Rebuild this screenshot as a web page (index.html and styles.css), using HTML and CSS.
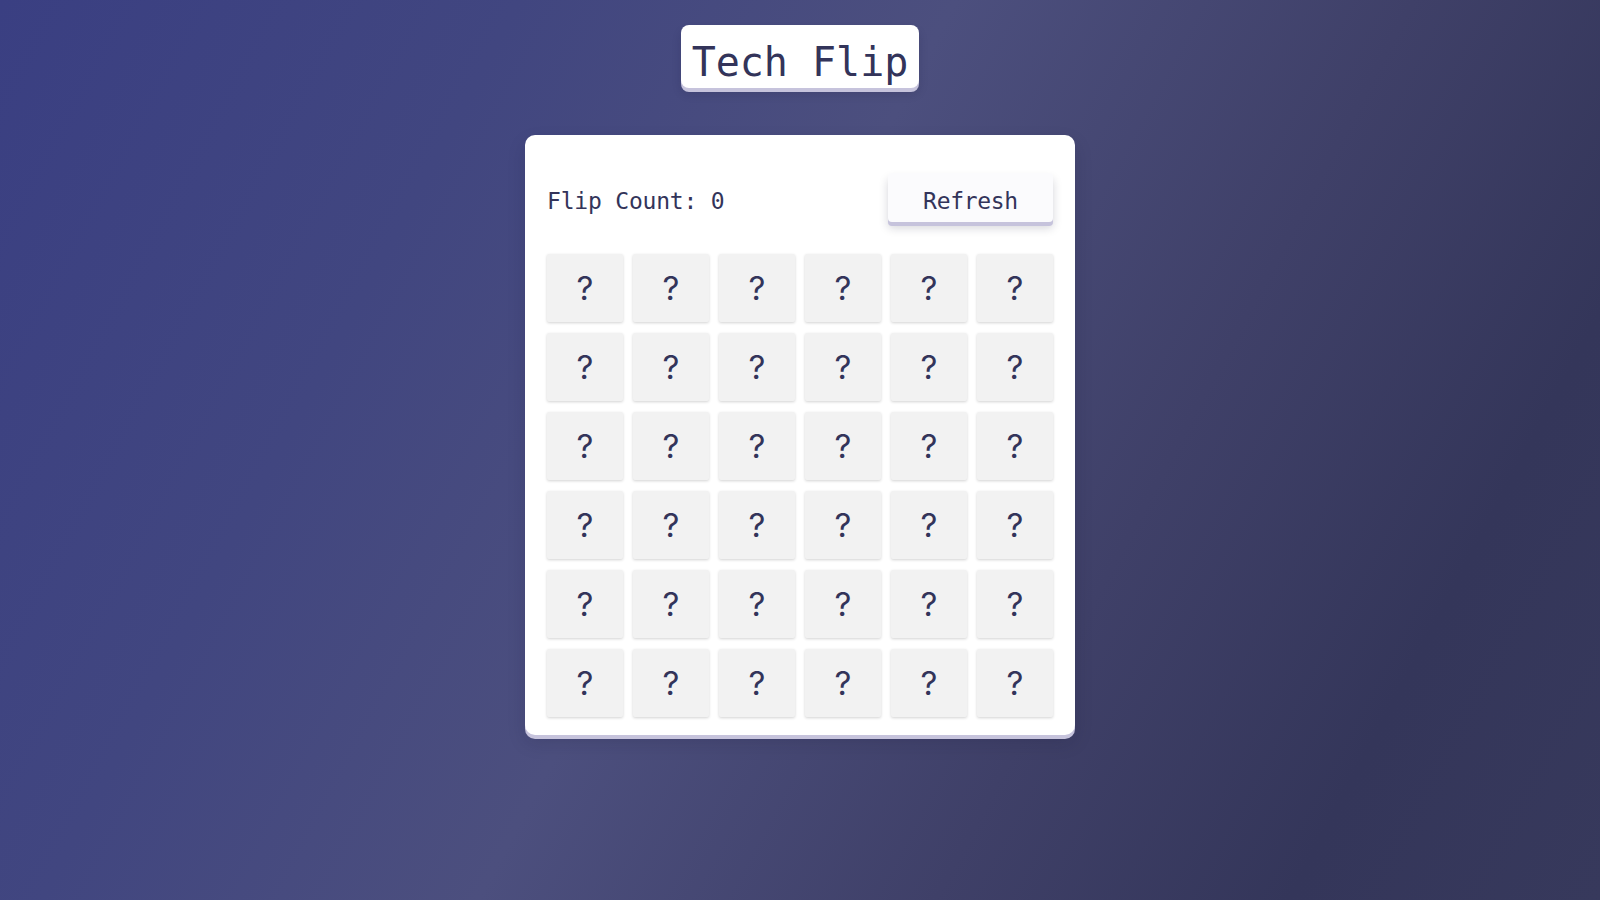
FILE: index.html
```html
<!DOCTYPE html>
<html lang="en">
<head>
<meta charset="utf-8">
<title>Tech Flip</title>
<link rel="stylesheet" href="styles.css">
</head>
<body>
<main class="page">
  <h1 class="title">Tech Flip</h1>
  <section class="board">
    <div class="board-header">
      <span class="flip-count">Flip Count: 0</span>
      <button class="refresh">Refresh</button>
    </div>
    <div class="grid">
      <div class="tile">?</div><div class="tile">?</div><div class="tile">?</div><div class="tile">?</div><div class="tile">?</div><div class="tile">?</div>
      <div class="tile">?</div><div class="tile">?</div><div class="tile">?</div><div class="tile">?</div><div class="tile">?</div><div class="tile">?</div>
      <div class="tile">?</div><div class="tile">?</div><div class="tile">?</div><div class="tile">?</div><div class="tile">?</div><div class="tile">?</div>
      <div class="tile">?</div><div class="tile">?</div><div class="tile">?</div><div class="tile">?</div><div class="tile">?</div><div class="tile">?</div>
      <div class="tile">?</div><div class="tile">?</div><div class="tile">?</div><div class="tile">?</div><div class="tile">?</div><div class="tile">?</div>
      <div class="tile">?</div><div class="tile">?</div><div class="tile">?</div><div class="tile">?</div><div class="tile">?</div><div class="tile">?</div>
    </div>
  </section>
</main>
</body>
</html>
```

FILE: styles.css
```css
html, body {
  margin: 0;
  padding: 0;
  height: 100%;
}

body {
  background: linear-gradient(118deg, #3a3f82 0%, #414680 25%, #4c4f7e 46%, #3f4068 68%, #34365a 85%, #37395c 100%);
  font-family: "DejaVu Sans Mono", "Liberation Mono", monospace;
  color: #33345a;
  overflow: hidden;
}

.page {
  display: flex;
  flex-direction: column;
  align-items: center;
  padding-top: 25px;
}

.title {
  margin: 0;
  background: #ffffff;
  border-radius: 8px;
  padding: 14px 11px 3px;
  font-size: 40px;
  line-height: 46px;
  font-weight: normal;
  color: #33345a;
  box-shadow: 0 4px 0 #c6c3dc, 0 6px 10px rgba(20, 20, 50, 0.15);
}

.board {
  margin-top: 47px;
  width: 550px;
  box-sizing: border-box;
  background: #ffffff;
  border-radius: 10px;
  padding: 38px 22px 18px;
  box-shadow: 0 4px 0 #c6c3dc, 0 8px 18px rgba(20, 20, 50, 0.15);
}

.board-header {
  display: flex;
  justify-content: space-between;
  align-items: center;
  margin-bottom: 32px;
}

.flip-count {
  font-size: 23px;
  letter-spacing: -0.2px;
  line-height: 27px;
  margin-top: 8px;
}

.refresh {
  width: 165px;
  height: 49px;
  box-sizing: border-box;
  border: none;
  border-radius: 4px;
  background: #fbfbfd;
  padding: 15px 0 7px;
  font-family: "DejaVu Sans Mono", "Liberation Mono", monospace;
  font-size: 23px;
  letter-spacing: -0.3px;
  line-height: 27px;
  color: #33345a;
  box-shadow: 0 4px 0 #c6c3dc, 0 6px 10px rgba(20, 20, 50, 0.18);
  cursor: pointer;
}

.grid {
  display: grid;
  grid-template-columns: repeat(6, 76px);
  grid-auto-rows: 68px;
  column-gap: 10px;
  row-gap: 11px;
}

.tile {
  display: flex;
  align-items: center;
  justify-content: center;
  background: #f2f2f2;
  border-radius: 2px;
  box-shadow: 0 1px 3px rgba(0, 0, 0, 0.18);
  font-family: "Inter", "Noto Sans", sans-serif;
  font-size: 33px;
  font-weight: 400;
  color: #33345a;
}
```
